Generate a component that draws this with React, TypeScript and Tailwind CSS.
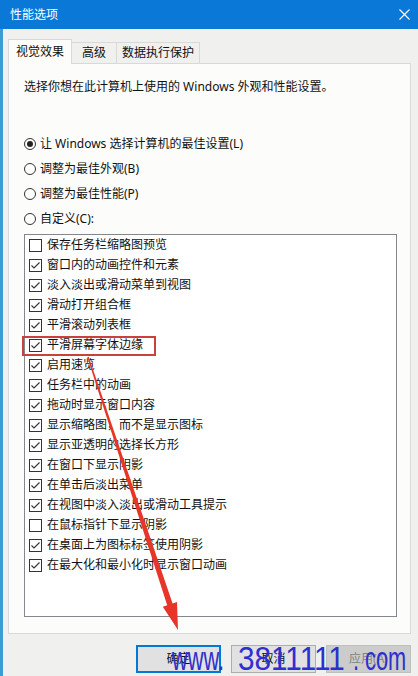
import React from "react";

const items: { label: string; checked: boolean }[] = [
  { label: "保存任务栏缩略图预览", checked: false },
  { label: "窗口内的动画控件和元素", checked: true },
  { label: "淡入淡出或滑动菜单到视图", checked: true },
  { label: "滑动打开组合框", checked: true },
  { label: "平滑滚动列表框", checked: true },
  { label: "平滑屏幕字体边缘", checked: true },
  { label: "启用速览", checked: true },
  { label: "任务栏中的动画", checked: true },
  { label: "拖动时显示窗口内容", checked: true },
  { label: "显示缩略图，而不是显示图标", checked: true },
  { label: "显示亚透明的选择长方形", checked: true },
  { label: "在窗口下显示阴影", checked: true },
  { label: "在单击后淡出菜单", checked: true },
  { label: "在视图中淡入淡出或滑动工具提示", checked: true },
  { label: "在鼠标指针下显示阴影", checked: false },
  { label: "在桌面上为图标标签使用阴影", checked: true },
  { label: "在最大化和最小化时显示窗口动画", checked: true },
];

const radios = [
  "让 Windows 选择计算机的最佳设置(L)",
  "调整为最佳外观(B)",
  "调整为最佳性能(P)",
  "自定义(C):",
];

function Radio({ selected }: { selected: boolean }) {
  return (
    <div className="w-[12px] h-[12px] rounded-full border border-[#333] bg-white flex items-center justify-center shrink-0">
      {selected && <div className="w-[6px] h-[6px] rounded-full bg-[#222]" />}
    </div>
  );
}

function Checkbox({ checked }: { checked: boolean }) {
  return (
    <div className="w-[13px] h-[13px] border border-[#333] bg-white shrink-0 flex items-center justify-center">
      {checked && (
        <svg width="11" height="11" viewBox="0 0 11 11">
          <polyline
            points="1.5,5.5 4,8 9.5,2.5"
            fill="none"
            stroke="#333"
            strokeWidth="1.1"
          />
        </svg>
      )}
    </div>
  );
}

export default function App() {
  return (
    <div className="relative w-[418px] h-[676px] overflow-hidden bg-[#f0f0ee] text-[12px] leading-[16px] text-[#111] font-['Noto_Sans','Noto_Sans_CJK_SC',sans-serif]">
      {/* title bar */}
      <div className="h-[29px] bg-[#0a78d7] flex items-center justify-between pl-[10px] pr-[8px] text-white">
        <span>性能选项</span>
        <svg width="11" height="11" viewBox="0 0 11 11">
          <path d="M0.5 0.5 L10.5 10.5 M10.5 0.5 L0.5 10.5" stroke="#fff" strokeWidth="1.1" />
        </svg>
      </div>

      <div className="border-l-[3px] border-[#3d9bd6] pl-[5px] pr-[7px] pt-[10px] h-[647px]">
        {/* tabs */}
        <div className="flex items-end h-[24px]">
          <div className="w-[64px] h-[25px] bg-[#fcfcfa] border border-b-0 border-[#d9d9d9] flex items-center justify-center relative z-10 -mb-px">
            视觉效果
          </div>
          <div className="w-[45px] h-[21px] border border-l-0 border-b-0 border-[#d9d9d9] flex items-center justify-center">
            高级
          </div>
          <div className="w-[83px] h-[21px] border border-l-0 border-b-0 border-[#d9d9d9] flex items-center justify-center">
            数据执行保护
          </div>
        </div>

        {/* panel */}
        <div className="h-[571px] bg-[#fcfcfa] border border-[#d9d9d9] pl-[15px] pr-[13px] pt-[15px] flex flex-col">
          <div>选择你想在此计算机上使用的 Windows 外观和性能设置。</div>

          <div className="mt-[36px] flex flex-col">
            {radios.map((r, i) => (
              <div key={r} className="h-[25px] flex items-center gap-[4px]">
                <Radio selected={i === 0} />
                <span>{r}</span>
              </div>
            ))}
          </div>

          <div className="mt-[3px] h-[383px] border border-[#828790] bg-white flex flex-col">
            {items.map((it) => (
              <div key={it.label} className="h-[20px] flex items-center pl-[4px] gap-[5px]">
                <Checkbox checked={it.checked} />
                <span>{it.label}</span>
              </div>
            ))}
          </div>
        </div>

        {/* buttons */}
        <div className="mt-[11px] flex justify-end gap-[10px]">
          <button className="w-[85px] h-[28px] bg-[#e1e1e1] border-2 border-[#0078d7] flex items-center justify-center">
            确定
          </button>
          <button className="w-[85px] h-[28px] bg-[#e1e1e1] border border-[#adadad] flex items-center justify-center">
            取消
          </button>
          <button className="w-[85px] h-[28px] bg-[#cccccc] border border-[#bfbfbf] text-[#838383] flex items-center justify-center">
            应用(A)
          </button>
        </div>
      </div>

      {/* red highlight box */}
      <div className="absolute left-[22px] top-[336px] w-[134px] h-[20px] border-2 border-[#c8413f]" />

      {/* red arrow */}
      <svg className="absolute left-0 top-0 pointer-events-none" width="418" height="676" viewBox="0 0 418 676">
        <polygon
          points="88.7,356.8 172.6,603.4 177,602 178,630 162.8,606.7 167.2,605.2 87.3,357.2"
          fill="#e8352a"
        />
      </svg>

      {/* watermark */}
      <div className="absolute top-[643px] left-0 w-[418px] h-[32px] pointer-events-none text-[33px] leading-[32px] text-[#2f2fd0] font-['Liberation_Sans',sans-serif]">
        <span className="absolute left-[172px] top-0 whitespace-nowrap origin-left scale-x-[0.66]">www.</span>
        <span className="absolute left-[238px] top-0 whitespace-nowrap origin-left scale-x-[0.9]">3811111</span>
        <span className="absolute left-[353px] top-0 whitespace-nowrap origin-left scale-x-[0.66]">. com</span>
      </div>
    </div>
  );
}
